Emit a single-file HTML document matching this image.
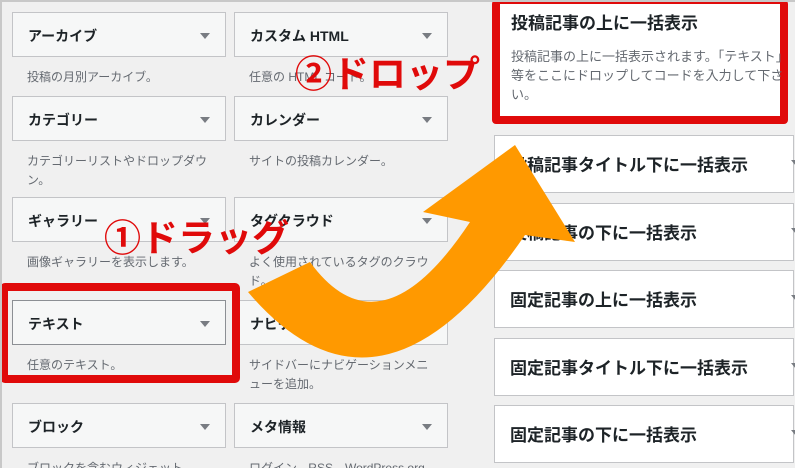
<!DOCTYPE html>
<html><head><meta charset="utf-8"><style>
*{margin:0;padding:0;box-sizing:border-box}
html,body{width:795px;height:468px;overflow:hidden}
body{background:#f0f0f0;font-family:"Liberation Sans","Noto Sans CJK JP",sans-serif;position:relative}
#f{position:absolute;left:0;top:0;width:795px;height:468px;border-top:2px solid #c8c8c8;border-left:2px solid #c8c8c8;pointer-events:none}
.w{position:absolute;width:214px;height:45px;background:#f6f7f7;border:1px solid #c3c4c7;font-size:14px;font-weight:bold;color:#1d2327;padding:13px 15px}
.w:after{content:"";position:absolute;right:15px;top:20px;border:5px solid transparent;border-top:6px solid #787c82;border-bottom:0}
.d{position:absolute;width:190px;font-size:12px;color:#646970;line-height:19px}
.r{position:absolute;left:494px;width:300px;height:58px;background:#fff;border:1px solid #c3c4c7;font-size:17px;font-weight:bold;color:#1d2327;padding:15px 15px}
.r:after{content:"";position:absolute;right:-8px;top:24px;border:5px solid transparent;border-top:6px solid #787c82;border-bottom:0}
.lab{position:absolute;color:#e00a0a;font-size:37px;font-weight:bold;white-space:nowrap;letter-spacing:0px}
</style></head><body>
<div class="w" style="left:12px;top:12px">アーカイブ</div>
<div class="w" style="left:234px;top:12px">カスタム HTML</div>
<div class="d" style="left:27px;top:68px">投稿の月別アーカイブ。</div>
<div class="d" style="left:249px;top:68px">任意の HTML コード。</div>
<div class="w" style="left:12px;top:96px">カテゴリー</div>
<div class="w" style="left:234px;top:96px">カレンダー</div>
<div class="d" style="left:27px;top:152px">カテゴリーリストやドロップダウン。</div>
<div class="d" style="left:249px;top:152px">サイトの投稿カレンダー。</div>
<div class="w" style="left:12px;top:197px">ギャラリー</div>
<div class="w" style="left:234px;top:197px">タグクラウド</div>
<div class="d" style="left:27px;top:253px">画像ギャラリーを表示します。</div>
<div class="d" style="left:249px;top:253px">よく使用されているタグのクラウド。</div>
<div class="w" style="left:12px;top:300px;border-color:#8c8f94">テキスト</div>
<div class="w" style="left:234px;top:300px">ナビゲーションメニュー</div>
<div class="d" style="left:27px;top:356px">任意のテキスト。</div>
<div class="d" style="left:249px;top:356px">サイドバーにナビゲーションメニューを追加。</div>
<div class="w" style="left:12px;top:403px">ブロック</div>
<div class="w" style="left:234px;top:403px">メタ情報</div>
<div class="d" style="left:27px;top:459px">ブロックを含むウィジェット。</div>
<div class="d" style="left:249px;top:459px">ログイン、RSS、WordPress.org</div>
<div style="position:absolute;left:0;top:283px;width:240px;height:100px;border:8px solid #e00a0a;border-radius:5px"></div>

<div style="position:absolute;left:492px;top:0;width:296px;height:124px;background:#fff;border:8px solid #e00a0a;border-top-width:4px;border-radius:4px;padding:5px 0 0 11px">
<div style="font-size:17px;font-weight:bold;color:#1d2327">投稿記事の上に一括表示</div>
<div style="font-size:13px;color:#646970;line-height:19px;margin-top:13px;width:275px">投稿記事の上に一括表示されます。「テキスト」等をここにドロップしてコードを入力して下さい。</div>
</div>
<div class="r" style="top:135px">投稿記事タイトル下に一括表示</div>
<div class="r" style="top:203px">投稿記事の下に一括表示</div>
<div class="r" style="top:270px">固定記事の上に一括表示</div>
<div class="r" style="top:338px">固定記事タイトル下に一括表示</div>
<div class="r" style="top:405px">固定記事の下に一括表示</div>

<svg style="position:absolute;left:0;top:0" width="795" height="468"><path d="M248,292 Q380,447 525,235 L575,242 L515,145 L423,212 L470,222 Q380,358 310,262 Z" fill="#ff9900"/></svg>
<div class="lab" style="left:104px;top:208px">①ドラッグ</div>
<div class="lab" style="left:295px;top:44px">②ドロップ</div>
<div id="f"></div>
</body></html>
